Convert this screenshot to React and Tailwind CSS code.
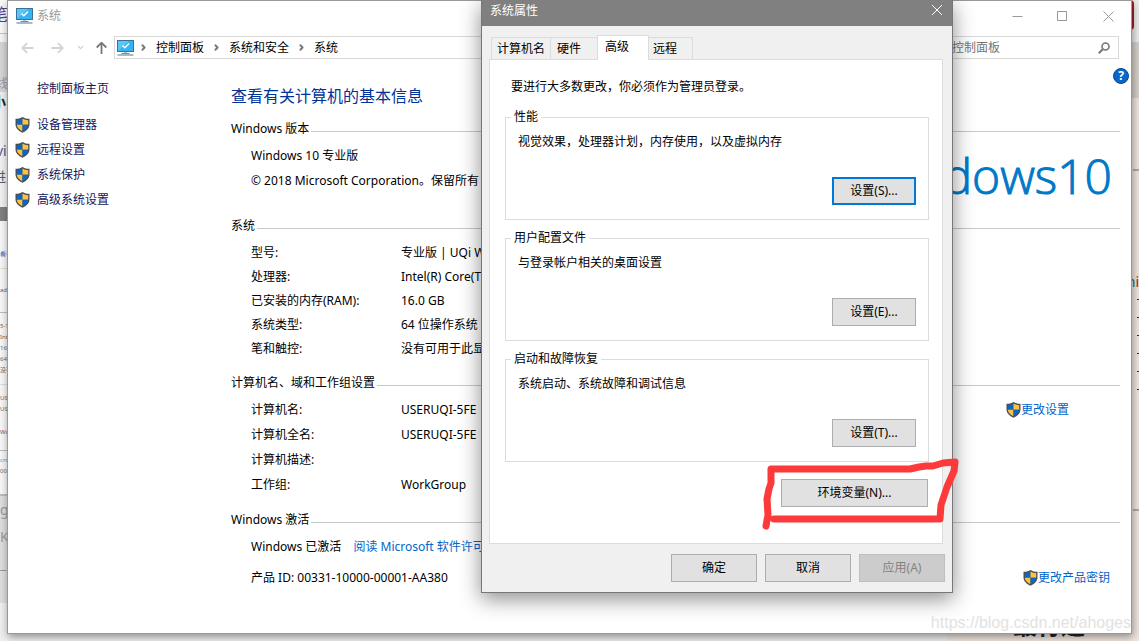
import { ChevronDown, ChevronRight } from "lucide-react";

const sideLinks = ["设备管理器", "远程设置", "系统保护", "高级系统设置"];

const systemRows = [
  ["型号:", "专业版 | UQi Windows"],
  ["处理器:", "Intel(R) Core(TM)"],
  ["已安装的内存(RAM):", "16.0 GB"],
  ["系统类型:", "64 位操作系统"],
  ["笔和触控:", "没有可用于此显示器"],
];

const nameRows = [
  ["计算机名:", "USERUQI-5FE"],
  ["计算机全名:", "USERUQI-5FE"],
  ["计算机描述:", ""],
  ["工作组:", "WorkGroup"],
];

const groups = [
  {
    title: "性能",
    text: "视觉效果，处理器计划，内存使用，以及虚拟内存",
    button: "设置(S)...",
    focused: true,
  },
  {
    title: "用户配置文件",
    text: "与登录帐户相关的桌面设置",
    button: "设置(E)...",
  },
  {
    title: "启动和故障恢复",
    text: "系统启动、系统故障和调试信息",
    button: "设置(T)...",
  },
];

const Shield = () => (
  <svg width="15" height="16" viewBox="0 0 15 16" className="shrink-0">
    <path d="M7.5 0C5.600 1.300 3 1.800.5 1.800v5.700c0 3.700 3 6.500 7 8.300 4-1.800 7-4.600 7-8.300V1.800C12 1.800 9.400 1.300 7.500 0z" fill="#4a4f55" />
    <path d="M7.500 1.500C5.900 2.600 3.900 3.100 1.800 3.200v4.500h5.700z" fill="#0a67c8" />
    <path d="M7.500 1.500c1.600 1.100 3.600 1.600 5.700 1.700v4.500H7.500z" fill="#ffc23c" />
    <path d="M1.800 7.700c.2 2.900 2.600 5.100 5.700 6.600V7.700z" fill="#ffc23c" />
    <path d="M13.200 7.700c-.2 2.900-2.600 5.100-5.700 6.600V7.700z" fill="#0a67c8" />
  </svg>
);

const Computer = () => (
  <svg width="17" height="16" viewBox="0 0 17 16" className="shrink-0">
    <rect x=".5" y=".5" width="16" height="11" fill="#35b4f3" stroke="#3d7194" />
    <path d="M1 11L12 1H1z" fill="#5cc5f8" />
    <path d="M5.500 5.500l2.300 2.300L12 3.500" fill="none" stroke="#fff" strokeWidth="1.500" />
    <path d="M4.500 13.500h8" stroke="#6e8ba0" />
    <path d="M7 12.500h3" stroke="#b5c6d2" />
    <path d="M.5 15h16" stroke="#8ba3b5" strokeWidth="1.500" />
  </svg>
);

const Arrow = ({ className }) => (
  <svg width="13" height="12" viewBox="0 0 13 12" fill="none" stroke="currentColor" strokeWidth="1.800" className={className}>
    <path d="M12.500 6H1.500M6 1.200L1.200 6 6 10.800" />
  </svg>
);

const Heading = ({ children }) => (
  <div className="flex h-5 items-center gap-0.5">
    <h2>{children}</h2>
    <div className="mt-[5px] h-px flex-1 bg-[#c8c8c8]" />
  </div>
);

const ShieldLink = ({ children, className }) => (
  <a href="#" className={`flex items-center text-[#0066cc] ${className}`}>
    <Shield />
    {children}
  </a>
);

const DialogButton = ({ children, className }) => (
  <button className={`h-7 bg-[#e1e1e1] text-center ${className}`}>{children}</button>
);

// Other windows that peek out around the system window
const Desktop = () => (
  <div aria-hidden="true" className="absolute inset-0 flex overflow-hidden bg-[#ededed]">
    <div className="flex w-[360px] flex-col bg-[#dedede] whitespace-nowrap">
      <div className="h-[34px] border-b border-[#c4c4c4] bg-[#f8f8f8] text-[16px] leading-[28px] text-[#5a3c8c]">
        <span className="-ml-2">笔</span>
      </div>
      <div className="h-2 bg-[#f4f4f4]" />
      <div className="h-[50px] bg-[#d5d5d5] pt-[34px] leading-4 text-[#999]">
        <span className="-ml-1">线</span>
      </div>
      <div className="h-5 bg-[#efefef] text-[14px] leading-5 font-bold text-[#222]">
        <span className="-ml-2">小</span>
      </div>
      <div className="h-[103px] bg-[#f1f1f1] pt-[26px] text-[14px] leading-[26px] text-[#445a94]">
        <div>
          <span className="-ml-1">vi</span>
        </div>
        <div className="text-[#556070]">
          <span className="-ml-2">进入</span>
        </div>
      </div>
      <div className="-mt-2 h-[14px] bg-[#808080]" />
      <div className="h-[275px] border-b-2 border-[#bbb] bg-[#f7f7f7] text-[6px] leading-[11px] text-[#666]">
        <div className="mt-3 border-b border-[#ddd] pt-4 pb-2 text-[#3c62b4]">看有</div>
        <div className="border-b border-[#bbb] pt-4 pb-4">adc</div>
        <div className="border-b border-[#ddd] py-2">
          <p>5-1</p>
          <p>Intel</p>
          <p>16.0</p>
          <p>64</p>
          <p>没有</p>
        </div>
        <div className="border-b border-[#bbb] pt-2 pb-3">
          <p>US</p>
          <p>US</p>
          <p className="mt-3">Wo</p>
        </div>
        <p className="mt-1 text-[#4c8cd0]">cros</p>
        <p>001</p>
      </div>
      <div className="h-[107px] text-[14px] leading-[27px] text-[#999]">
        <p>g</p>
        <p>K,</p>
        <p>_r</p>
      </div>
      <div className="flex-1 bg-[#efefef]" />
    </div>
    <div className="flex-1" />
    <div className="flex w-[192px] flex-col bg-[#f0e6df]">
      <div className="h-[42px] bg-[#ececec]">
        <div className="mr-[5px] h-[30px] rounded-r-sm bg-[#a91d27]" />
      </div>
      <div className="h-9 bg-[#d6d0ca]" />
      <div className="h-5 bg-[#d6d0ca]" />
      <div className="mt-[71px] border-t-2 border-dashed border-[#b0a8a2]" />
      <div className="mt-[101px] flex justify-end text-[14px] leading-5 text-[#2d5f93]">
        h<span className="text-[#b01c24]">i</span>
      </div>
      <div className="mt-[7px] flex flex-col items-end gap-[17px]">
        {[1, 2, 3, 4, 5, 6].map((n) => (
          <div key={n} className="h-px w-0.5 bg-[#3a2a20]" />
        ))}
      </div>
      <div className="mt-[119px] border-t-2 border-dashed border-[#b0a8a2]" />
      <div className="mt-auto pb-1 pl-[66px] text-[24px] leading-[24px] font-bold text-[#222]">最行道</div>
    </div>
  </div>
);

const SystemWindow = () => (
  <div className="relative mr-[7px] mb-[7px] ml-[7px] flex-1 border border-[#999] bg-white shadow-[1px_3px_8px_rgba(0,0,0,0.4)]">
    <header className="flex h-[30px] items-center pl-2 text-[#999]">
      <Computer />
      <span className="ml-1 flex-1">系统</span>
      <button aria-label="最小化" className="flex h-full w-[46px] items-center justify-center">
        <svg width="11" height="11" stroke="currentColor"><path d="M.5 5.500h10" /></svg>
      </button>
      <button aria-label="最大化" className="flex h-full w-[45px] items-center justify-center">
        <svg width="11" height="11" fill="none" stroke="currentColor"><path d="M.5.5h9v9H.5z" /></svg>
      </button>
      <button aria-label="关闭" className="flex h-full w-[46px] items-center justify-center">
        <svg width="11" height="11" stroke="currentColor"><path d="M.5.5l10 10M10.500.5l-10 10" /></svg>
      </button>
    </header>

    <nav className="mt-[5px] flex h-[23px] items-center pr-3 pl-1">
      <button aria-label="后退" className="flex w-[30px] justify-center text-[#d4d4d4]">
        <Arrow />
      </button>
      <button aria-label="前进" className="flex w-[30px] justify-center text-[#d4d4d4]">
        <Arrow className="rotate-180" />
      </button>
      <button aria-label="最近" className="flex w-4 justify-center text-[#ccc]">
        <ChevronDown size={9} strokeWidth={3} />
      </button>
      <button aria-label="向上" className="flex w-[26px] justify-center text-[#777]">
        <Arrow className="rotate-90" />
      </button>
      <div className="flex h-full flex-1 items-center border border-[#d9d9d9] pl-0.5">
        <Computer />
        <ChevronRight size={9} strokeWidth={5} className="ml-[5px] text-[#777]" />
        <a href="#" className="ml-2">控制面板</a>
        <ChevronRight size={9} strokeWidth={5} className="mx-2 text-[#777]" />
        <a href="#">系统和安全</a>
        <ChevronRight size={9} strokeWidth={5} className="mx-2 text-[#777]" />
        <a href="#">系统</a>
      </div>
      <label className="ml-2 flex h-full w-[198px] items-center border border-[#d9d9d9] pr-2 pl-1.5">
        <input aria-label="搜索" placeholder="搜索控制面板" className="w-full min-w-0 outline-none placeholder:text-[#767676]" />
        <svg width="12" height="12" viewBox="0 0 12 12" fill="none" stroke="#777" className="shrink-0">
          <circle cx="7.500" cy="4.500" r="3.500" strokeWidth="1.600" />
          <path d="M5 7L.8 11.200" strokeWidth="2" />
        </svg>
      </label>
    </nav>

    <button aria-label="帮助" className="absolute top-[67px] right-[2px] h-4 w-4 rounded-full border border-[#0a4a94] bg-[#0a67c8] text-[12px] leading-[14px] font-bold text-white">
      ?
    </button>

    <div className="flex">
      <aside className="w-[223px] shrink-0 pt-[18px] pl-[7px] text-[#15155c]">
        <a href="#" className="block h-6 pl-[22px] leading-6">控制面板主页</a>
        <ul className="mt-[11px]">
          {sideLinks.map((link) => (
            <li key={link}>
              <a href="#" className="flex h-[25px] items-center gap-[7px]">
                <Shield />
                {link}
              </a>
            </li>
          ))}
        </ul>
      </aside>

      <main className="min-w-0 flex-1 pt-[25px] pr-[11px] whitespace-nowrap">
        <h1 className="mb-[11px] text-[16px] leading-6 text-[#003399]">查看有关计算机的基本信息</h1>

        <Heading>Windows 版本</Heading>
        <div className="flex h-[77px] justify-between pt-1 pl-5">
          <div className="leading-[25px]">
            <p>Windows 10 专业版</p>
            <p>© 2018 Microsoft Corporation。保留所有</p>
          </div>
          <div className="flex pr-2 font-['Open_Sans'] text-[48px] leading-[66px] font-light text-[#0078c8] [-webkit-text-stroke:1px]">
            <span>Windows</span>
            <span>10</span>
          </div>
        </div>

        <Heading>系统</Heading>
        <div className="mt-[5px] mb-3 pl-5">
          {systemRows.map(([label, value]) => (
            <div key={label} className="flex h-6 items-center">
              <span className="w-[150px]">{label}</span>
              <span>{value}</span>
            </div>
          ))}
        </div>

        <Heading>计算机名、域和工作组设置</Heading>
        <div className="mt-1 mb-[13px] flex items-start justify-between pl-5">
          <div>
            {nameRows.map(([label, value]) => (
              <div key={label} className="flex h-[25px] items-center">
                <span className="w-[150px]">{label}</span>
                <span>{value}</span>
              </div>
            ))}
          </div>
          <ShieldLink className="mr-[51px] h-[25px]">更改设置</ShieldLink>
        </div>

        <Heading>Windows 激活</Heading>
        <div className="mt-1 flex h-[25px] items-center gap-3 pl-5">
          <span>Windows 已激活</span>
          <a href="#" className="text-[#0066cc]">阅读 Microsoft 软件许可</a>
        </div>
        <div className="mt-1.5 flex h-[25px] items-center justify-between pl-5">
          <span>产品 ID: 00331-10000-00001-AA380</span>
          <ShieldLink className="mr-2.5">更改产品密钥</ShieldLink>
        </div>
      </main>
    </div>
  </div>
);

const PropertiesDialog = () => (
  <div role="dialog" aria-label="系统属性" className="absolute top-0 left-[481px] w-[472px] border border-t-0 border-[#777] bg-[#f0f0f0] shadow-[0_6px_20px_rgba(0,0,0,0.45)]">
    <div className="flex h-[26px] items-start justify-between bg-[#808080] pr-[9px] pl-2 text-white">
      <span className="leading-[22px]">系统属性</span>
      <button aria-label="关闭" className="pt-1">
        <svg width="12" height="12" stroke="currentColor"><path d="M1 1l10 10M11 1L1 11" /></svg>
      </button>
    </div>

    <div role="tablist" className="flex h-[33px] items-end pl-[9px]">
      <button role="tab" className="h-[22px] w-[59px] border-t border-l border-[#dcdcdc] pl-[5px] text-left">计算机名</button>
      <button role="tab" className="h-[22px] w-[47px] border-t border-l border-[#dcdcdc] pl-1.5 text-left">硬件</button>
      <button role="tab" aria-selected="true" className="relative -mb-px h-[25px] w-[52px] border border-b-0 border-[#dcdcdc] bg-white pb-0.5 pl-[7px] text-left">高级</button>
      <button role="tab" className="h-[22px] w-[44px] border-t border-r border-[#dcdcdc] pl-1 text-left">远程</button>
    </div>

    <div role="tabpanel" className="mr-[9px] ml-[7px] border border-[#dcdcdc] bg-white pt-[18px] pr-[13px] pb-9 pl-[15px]">
      <p className="mb-[13px] pl-1.5 leading-[18px]">要进行大多数更改，你必须作为管理员登录。</p>
      <div className="flex flex-col gap-2.5">
        {groups.map((group) => (
          <fieldset key={group.title} className="border border-[#dcdcdc] pr-3 pb-3.5 pl-3">
            <legend className="-ml-[7px] px-[3px] leading-4">{group.title}</legend>
            <p className="mt-2 mb-[26px] leading-[18px]">{group.text}</p>
            <div className="flex justify-end">
              <DialogButton className={group.focused ? "w-[84px] border-2 border-[#0078d7]" : "w-[84px] border border-[#adadad]"}>
                {group.button}
              </DialogButton>
            </div>
          </fieldset>
        ))}
      </div>
      <div className="mt-[17px] flex justify-end pr-px">
        <div className="relative">
          <DialogButton className="w-[147px] border border-[#adadad]">环境变量(N)...</DialogButton>
          {/* red marker around the button */}
          <svg width="200" height="76" viewBox="0 0 200 76" fill="none" stroke="#fc3a3a" strokeWidth="7" strokeLinecap="round" strokeLinejoin="round" className="pointer-events-none absolute -top-6 -left-5 max-w-none">
            <path d="M5 71L7 60 6 44 8 34 10 28 10 14H149L158 12 165 11 172 11 182 8 194 7 193 16 186 32 182 44 180 50 179 64H13" />
          </svg>
        </div>
      </div>
    </div>

    <div className="flex justify-end gap-2 pt-2.5 pr-[7px] pb-2.5">
      <DialogButton className="w-[86px] border border-[#adadad]">确定</DialogButton>
      <DialogButton className="w-[86px] border border-[#adadad]">取消</DialogButton>
      <button disabled className="h-7 w-[86px] border border-[#bfbfbf] bg-[#cccccc] text-[#838383]">应用(A)</button>
    </div>
  </div>
);

export default function App() {
  return (
    <div className="relative flex min-h-screen overflow-hidden font-['Noto_Sans','Noto_Sans_CJK_SC',sans-serif] text-[12px] leading-[18px] text-black">
      <Desktop />
      <SystemWindow />
      <PropertiesDialog />
      <div className="absolute right-2 bottom-2 font-['Liberation_Sans',sans-serif] text-[16px] leading-5 text-[#e2e2e2]">
        https://blog.csdn.net/ahoges
      </div>
    </div>
  );
}
